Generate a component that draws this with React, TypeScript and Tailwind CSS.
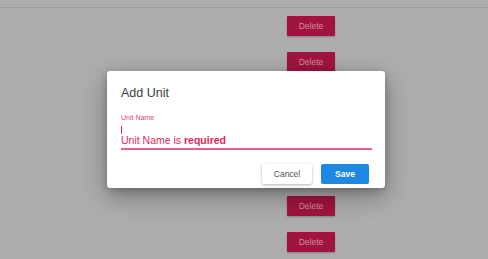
import React from "react";

export default function App() {
  const rows = [0, 1, 2, 3, 4, 5, 6];
  return (
    <div className="relative w-[488px] h-[259px] bg-[#adadad] overflow-hidden font-['Liberation_Sans',Arial,sans-serif]">
      <div className="h-[8px] border-b border-[#9c9c9c]" />
      <div className="flex flex-col gap-4 pt-2 ml-[287px]">
        {rows.map((r) => (
          <div
            key={r}
            className="w-[48px] h-[20px] bg-[#a1143f] shadow-[0_1px_2px_rgba(0,0,0,0.25)] rounded-[1px] flex items-center justify-center text-[8.5px] text-[#cf8aa2]"
          >
            Delete
          </div>
        ))}
      </div>

      <div className="absolute left-[107px] top-[71px] w-[278px] h-[117px] bg-white rounded-[3px] shadow-[0_8px_24px_rgba(0,0,0,0.35),0_2px_6px_rgba(0,0,0,0.2)] flex flex-col pl-[14px] pr-[16px] pt-[15px]">
        <div className="text-[12.5px] leading-[14px] text-[#3c3c3c]">Add Unit</div>
        <div className="mt-[14px] text-[7px] leading-[8px] text-[#ee3d7a]">Unit Name</div>
        <div className="mt-[4px] w-px h-[8px] bg-[#e91e63]" />
        <div className="mt-0 text-[10.5px] leading-[12px] text-[#e91e63]">
          Unit Name is <span className="font-bold">required</span>
        </div>
        <div className="mt-[2px] w-[251px] h-[2px] bg-[#ef5a8c]" />
        <div className="mt-[14px] flex justify-end gap-[9px]">
          <div className="w-[50px] h-[20px] bg-white rounded-[2px] shadow-[0_1px_3px_rgba(0,0,0,0.3)] flex items-center justify-center text-[8.5px] text-[#555]">
            Cancel
          </div>
          <div className="w-[48px] h-[20px] bg-[#1e88e5] rounded-[2px] flex items-center justify-center text-[8.5px] font-bold text-white">
            Save
          </div>
        </div>
      </div>
    </div>
  );
}
